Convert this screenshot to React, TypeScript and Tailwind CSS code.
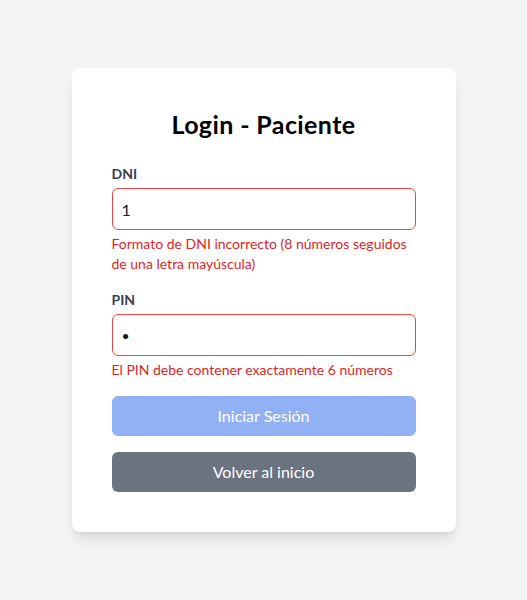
export default function App() {
  return (
    <div className="min-h-screen bg-[#f3f4f6] flex justify-center pt-[68px]" style={{ fontFamily: 'Lato, "Noto Sans", sans-serif' }}>
      <div className="w-[384px] h-fit bg-white rounded-lg shadow-lg px-10 pt-10 pb-10">
        <h1 className="text-[25px] leading-8 font-bold tracking-[0.4px] text-black text-center mb-6">Login - Paciente</h1>
        <div className="mb-4">
          <label className="block text-sm leading-5 font-bold text-[#374151] mb-1">DNI</label>
          <input
            readOnly
            value="1"
            className="block w-full h-[42px] px-[9px] border border-[#ef4444] rounded-md text-base text-[#111827] outline-none"
          />
          <p className="mt-1 text-sm leading-5 text-[#dc2626]">Formato de DNI incorrecto (8 números seguidos de una letra mayúscula)</p>
        </div>
        <div className="mb-4">
          <label className="block text-sm leading-5 font-bold text-[#374151] mb-1">PIN</label>
          <input
            readOnly
            type="password"
            value="1"
            className="block w-full h-[42px] px-[9px] border border-[#ef4444] rounded-md text-sm text-[#111827] outline-none"
          />
          <p className="mt-1 text-sm leading-5 text-[#dc2626]">El PIN debe contener exactamente 6 números</p>
        </div>
        <button className="block w-full h-10 rounded-md bg-[#92b1f5] text-white text-base">Iniciar Sesión</button>
        <button className="block w-full h-10 mt-4 rounded-md bg-[#6b7280] text-white text-base">Volver al inicio</button>
      </div>
    </div>
  );
}
